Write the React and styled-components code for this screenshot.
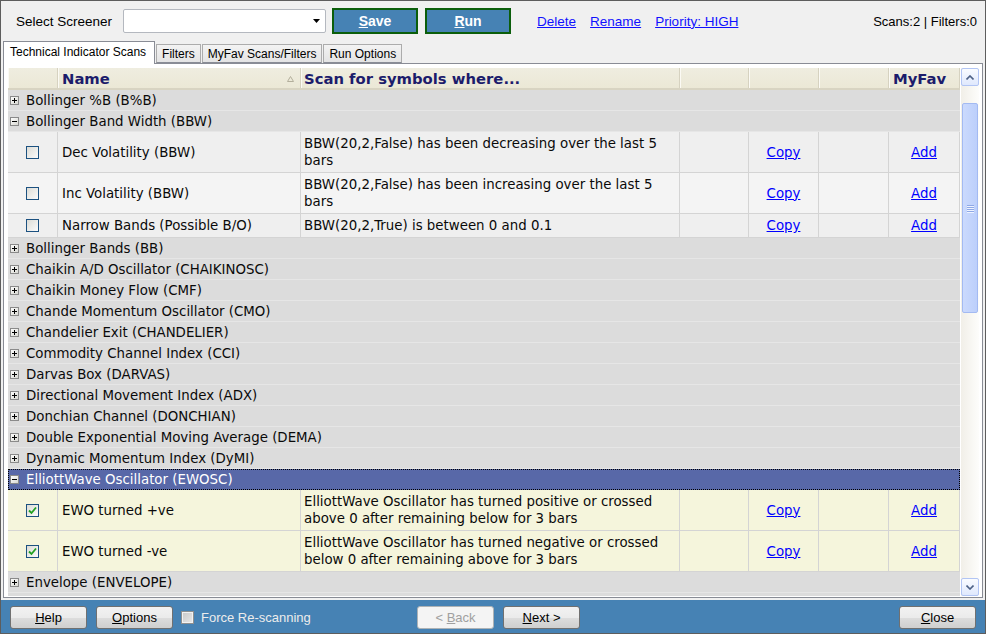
import React from 'react';
import styled, { createGlobalStyle } from 'styled-components';

const Global = createGlobalStyle`
  html, body { margin: 0; padding: 0; background: #f0f0f0; }
  body { font-family: "Liberation Sans", Arial, sans-serif; }
  * { box-sizing: border-box; }
`;

const GRID_FONT = `"DejaVu Sans", Verdana, sans-serif`;
const COLS = '50px 243px 379px 69px 70px 70px 71px';

const Window = styled.div`
  width: 986px;
  height: 634px;
  border: 1px solid #5d5d5d;
  background: #f0f0f0;
  display: flex;
  flex-direction: column;
  overflow: hidden;
`;

const TopBar = styled.div`
  height: 40px;
  flex: 0 0 40px;
  display: flex;
  align-items: center;
  padding: 0 8px 0 15px;
  font-size: 13.5px;
  color: #000;
`;

const Label = styled.span`
  margin-right: 11px;
`;

const Combo = styled.div`
  width: 203px;
  height: 24px;
  background: #fff;
  border: 1px solid #b4b8bf;
  border-radius: 2px;
  display: flex;
  align-items: center;
  justify-content: flex-end;
  padding-right: 4px;
  margin-right: 6px;
`;

const ActionButton = styled.button`
  width: 86px;
  height: 26px;
  margin-right: 7px;
  background: #4682b4;
  border: 2px solid #0b5e0b;
  color: #fff;
  font-family: "Liberation Sans", Arial, sans-serif;
  font-weight: bold;
  font-size: 14px;
  padding: 0;
  u { text-decoration: underline; }
`;

const TopLink = styled.a`
  color: #1010ff;
  text-decoration: underline;
  font-size: 13.5px;
  margin-left: ${p => p.$ml}px;
  cursor: pointer;
`;

const Stats = styled.span`
  margin-left: auto;
  font-size: 13px;
`;

const TabsRow = styled.div`
  height: 22px;
  flex: 0 0 22px;
  display: flex;
  align-items: flex-end;
  padding-left: 2px;
  gap: 1px;
  font-size: 12px;
`;

const Tab = styled.div`
  position: relative;
  z-index: ${p => (p.$active ? 2 : 1)};
  height: ${p => (p.$active ? 23 : 19)}px;
  margin-bottom: ${p => (p.$active ? -1 : 0)}px;
  padding: 0 ${p => (p.$active ? 8 : 5)}px ${p => (p.$active ? 2 : 0)}px ${p => (p.$active ? 6 : 5)}px;
  display: flex;
  align-items: center;
  border: 1px solid ${p => (p.$active ? '#898c95' : '#acacac')};
  border-bottom: ${p => (p.$active ? 'none' : '1px solid #898c95')};
  background: ${p => (p.$active ? '#fff' : 'linear-gradient(#f3f3f3, #e4e4e4)')};
  color: #000;
  white-space: nowrap;
`;

const Panel = styled.div`
  flex: 1;
  margin: 0 2px 2px 2px;
  border: 1px solid #898c95;
  background: #fff;
  padding: 4px 3px 1px 4px;
  display: flex;
  min-height: 0;
`;

const Table = styled.div`
  width: 952px;
  flex: 0 0 952px;
  display: flex;
  flex-direction: column;
  overflow: hidden;
  font-family: ${GRID_FONT};
  font-size: 13.35px;
  color: #0a0a0a;
`;

const HeaderRow = styled.div`
  display: grid;
  grid-template-columns: ${COLS};
  height: 22px;
  flex: 0 0 22px;
  background: linear-gradient(#efede0, #ebe8d6);
  border-bottom: 2px solid #d8d4c2;
`;

const HeaderCell = styled.div`
  display: flex;
  align-items: center;
  padding-left: ${p => p.$pad || 0}px;
  border-right: 1px solid #d6d2c0;
  box-shadow: inset 1px 0 0 #fbfaf4;
  font-weight: bold;
  font-size: 14.8px;
  color: #1c1c6b;
  white-space: nowrap;
  position: relative;
`;

const SortGlyph = styled.svg`
  position: absolute;
  right: 6px;
  top: 8px;
`;

const Body = styled.div`
  flex: 1;
  overflow: hidden;
`;

const GroupRow = styled.div`
  height: 21px;
  display: flex;
  align-items: center;
  padding-left: 2px;
  background: ${p => (p.$selected ? '#5868a8' : '#dcdcdc')};
  color: ${p => (p.$selected ? '#fff' : '#0a0a0a')};
  border-bottom: 1px solid ${p => (p.$selected ? '#5868a8' : '#e6e6e6')};
  outline: ${p => (p.$selected ? '1px dotted #000' : 'none')};
  outline-offset: -1px;
  white-space: nowrap;
`;

const GroupText = styled.span`
  margin-left: 7px;
`;

const DetailRow = styled.div`
  display: grid;
  grid-template-columns: ${COLS};
  background: ${p => p.$bg};
`;

const Cell = styled.div`
  border-right: 1px solid #d4d4d4;
  border-bottom: 1px solid #d4d4d4;
  padding: 3px 3px 3px ${p => p.$padL ?? 3}px;
  line-height: 17px;
  display: flex;
  align-items: center;
  justify-content: ${p => (p.$center ? 'center' : 'flex-start')};
  white-space: nowrap;
`;

const CheckBox = styled.span`
  width: 13px;
  height: 13px;
  border: 1px solid #1c5180;
  background: linear-gradient(135deg, #dcdcd6, #fbfbfb);
  display: inline-flex;
  align-items: center;
  justify-content: center;
`;

const GridLink = styled.a`
  color: #0000ff;
  text-decoration: underline;
  cursor: pointer;
`;

const ScrollBar = styled.div`
  width: 18px;
  flex: 0 0 18px;
  margin-left: 1px;
  display: flex;
  flex-direction: column;
  background: linear-gradient(90deg, #f1efe8, #fdfdfb);
`;

const ScrollBtn = styled.div`
  height: 18px;
  flex: 0 0 18px;
  border: 1px solid #b2c5f4;
  border-radius: 2px;
  background: linear-gradient(#fafcff, #dfe8fd);
  display: flex;
  align-items: center;
  justify-content: center;
`;

const Track = styled.div`
  flex: 1;
  padding: 17px 1px 0 1px;
`;

const Thumb = styled.div`
  height: 210px;
  border: 1px solid #a3baf2;
  border-radius: 2px;
  background: linear-gradient(90deg, #cbdafd, #bccffb);
  display: flex;
  flex-direction: column;
  align-items: center;
  justify-content: center;
  gap: 1px;
`;

const Grip = styled.span`
  width: 7px;
  height: 1px;
  background: #8ea8e6;
  box-shadow: 0 1px 0 #eef3ff;
`;

const BottomBar = styled.div`
  height: 33px;
  flex: 0 0 33px;
  background: #4682b4;
  display: flex;
  align-items: center;
  padding: 1px 9px 0 9px;
  font-size: 13px;
`;

const LeftGroup = styled.div`
  flex: 0 0 407px;
  display: flex;
  align-items: center;
`;

const Btn = styled.button`
  width: 77px;
  height: 23px;
  margin-right: ${p => p.$mr || 0}px;
  border: 1px solid ${p => (p.disabled ? '#adb2b5' : '#707070')};
  border-radius: 3px;
  background: ${p => (p.disabled ? '#f4f4f4' : 'linear-gradient(#f2f2f2 0%, #ebebeb 50%, #dddddd 51%, #cfcfcf 100%)')};
  color: ${p => (p.disabled ? '#a0a0a0' : '#000')};
  font-family: "Liberation Sans", Arial, sans-serif;
  font-size: 13px;
  padding: 0;
  u { text-decoration: underline; }
`;

const BarCheck = styled.span`
  width: 13px;
  height: 13px;
  margin: 0 7px 0 8px;
  border: 1px solid #8e8f8f;
  background: linear-gradient(135deg, #c8c8c8, #e8e8e8);
  box-shadow: inset 0 0 0 1px #f2f2f2;
`;

const BarText = styled.span`
  color: #ececec;
`;

const Spacer = styled.div`
  flex: 1;
`;

const Expander = ({ open }) => (
  <svg width="9" height="9" viewBox="0 0 9 9">
    <defs>
      <linearGradient id={open ? 'gm' : 'gp'} x1="0" y1="0" x2="1" y2="1">
        <stop offset="0" stopColor="#ffffff" />
        <stop offset="1" stopColor="#d6d6d0" />
      </linearGradient>
    </defs>
    <rect x="0.5" y="0.5" width="8" height="8" fill={`url(#${open ? 'gm' : 'gp'})`} stroke="#8a8a8a" />
    <path d="M2 4.5h5" stroke="#000" strokeWidth="1" />
    {!open && <path d="M4.5 2v5" stroke="#000" strokeWidth="1" />}
  </svg>
);

const Check = () => (
  <svg width="9" height="9" viewBox="0 0 9 9">
    <path d="M1 4.5 L3.5 7 L8 1.5" fill="none" stroke="#21a121" strokeWidth="1.8" />
  </svg>
);

const groupsA = [
  'Bollinger Bands (BB)',
  'Chaikin A/D Oscillator (CHAIKINOSC)',
  'Chaikin Money Flow (CMF)',
  'Chande Momentum Oscillator (CMO)',
  'Chandelier Exit (CHANDELIER)',
  'Commodity Channel Index (CCI)',
  'Darvas Box (DARVAS)',
  'Directional Movement Index (ADX)',
  'Donchian Channel (DONCHIAN)',
  'Double Exponential Moving Average (DEMA)',
  'Dynamic Momentum Index (DyMI)',
];

const bbw = [
  { name: 'Dec Volatility (BBW)', lines: ['BBW(20,2,False) has been decreasing over the last 5', 'bars'], bg: '#efefef' },
  { name: 'Inc Volatility (BBW)', lines: ['BBW(20,2,False) has been increasing over the last 5', 'bars'], bg: '#f4f4f4' },
  { name: 'Narrow Bands (Possible B/O)', lines: ['BBW(20,2,True) is between 0 and 0.1'], bg: '#efefef' },
];

const ewo = [
  { name: 'EWO turned +ve', lines: ['ElliottWave Oscillator has turned positive or crossed', 'above 0 after remaining below for 3 bars'], bg: '#f5f5dc', checked: true },
  { name: 'EWO turned -ve', lines: ['ElliottWave Oscillator has turned negative or crossed', 'below 0 after remaining above for 3 bars'], bg: '#f5f5dc', checked: true },
];

const Group = ({ name, open, selected }) => (
  <GroupRow $selected={selected}>
    {name && <Expander open={open} />}
    {name && <GroupText>{name}</GroupText>}
  </GroupRow>
);

const Detail = ({ item }) => (
  <DetailRow $bg={item.bg}>
    <Cell $center>
      <CheckBox>{item.checked && <Check />}</CheckBox>
    </Cell>
    <Cell $padL={4}>{item.name}</Cell>
    <Cell>
      <div>
        {item.lines.map((l, i) => (
          <div key={i}>{l}</div>
        ))}
      </div>
    </Cell>
    <Cell />
    <Cell $center>
      <GridLink>Copy</GridLink>
    </Cell>
    <Cell />
    <Cell $center>
      <GridLink>Add</GridLink>
    </Cell>
  </DetailRow>
);

export default function App() {
  return (
    <>
      <Global />
      <Window>
        <TopBar>
          <Label>Select Screener</Label>
          <Combo>
            <svg width="8" height="5" viewBox="0 0 8 5">
              <path d="M0 0h7L3.5 4z" fill="#000" />
            </svg>
          </Combo>
          <ActionButton>
            <u>S</u>ave
          </ActionButton>
          <ActionButton>
            <u>R</u>un
          </ActionButton>
          <TopLink $ml={19}>Delete</TopLink>
          <TopLink $ml={14}>Rename</TopLink>
          <TopLink $ml={14}>Priority: HIGH</TopLink>
          <Stats>Scans:2 | Filters:0</Stats>
        </TopBar>
        <TabsRow>
          <Tab $active>Technical Indicator Scans</Tab>
          <Tab>Filters</Tab>
          <Tab>MyFav Scans/Filters</Tab>
          <Tab>Run Options</Tab>
        </TabsRow>
        <Panel>
          <Table>
            <HeaderRow>
              <HeaderCell />
              <HeaderCell $pad={4}>
                Name
                <SortGlyph width="7" height="6" viewBox="0 0 7 6">
                  <path d="M3.5 0.5 L6.5 5.5 H0.5 Z" fill="none" stroke="#b3af9c" strokeWidth="1" />
                </SortGlyph>
              </HeaderCell>
              <HeaderCell $pad={3}>Scan for symbols where...</HeaderCell>
              <HeaderCell />
              <HeaderCell />
              <HeaderCell />
              <HeaderCell $pad={4}>MyFav</HeaderCell>
            </HeaderRow>
            <Body>
              <Group name="Bollinger %B (B%B)" />
              <Group name="Bollinger Band Width (BBW)" open />
              {bbw.map(it => (
                <Detail key={it.name} item={it} />
              ))}
              {groupsA.map(g => (
                <Group key={g} name={g} />
              ))}
              <Group name="ElliottWave Oscillator (EWOSC)" open selected />
              {ewo.map(it => (
                <Detail key={it.name} item={it} />
              ))}
              <Group name="Envelope (ENVELOPE)" />
              <Group />
            </Body>
          </Table>
          <ScrollBar>
            <ScrollBtn>
              <svg width="8" height="5" viewBox="0 0 8 5">
                <path d="M0.5 4.5 L4 1 L7.5 4.5" fill="none" stroke="#4d6185" strokeWidth="1.6" />
              </svg>
            </ScrollBtn>
            <Track>
              <Thumb>
                <Grip />
                <Grip />
                <Grip />
                <Grip />
              </Thumb>
            </Track>
            <ScrollBtn>
              <svg width="8" height="5" viewBox="0 0 8 5">
                <path d="M0.5 0.5 L4 4 L7.5 0.5" fill="none" stroke="#4d6185" strokeWidth="1.6" />
              </svg>
            </ScrollBtn>
          </ScrollBar>
        </Panel>
        <BottomBar>
          <LeftGroup>
            <Btn $mr={9}>
              <u>H</u>elp
            </Btn>
            <Btn>
              <u>O</u>ptions
            </Btn>
            <BarCheck />
            <BarText>Force Re-scanning</BarText>
          </LeftGroup>
          <Btn disabled $mr={9}>
            &lt; <u>B</u>ack
          </Btn>
          <Btn>
            <u>N</u>ext &gt;
          </Btn>
          <Spacer />
          <Btn>
            <u>C</u>lose
          </Btn>
        </BottomBar>
      </Window>
    </>
  );
}
